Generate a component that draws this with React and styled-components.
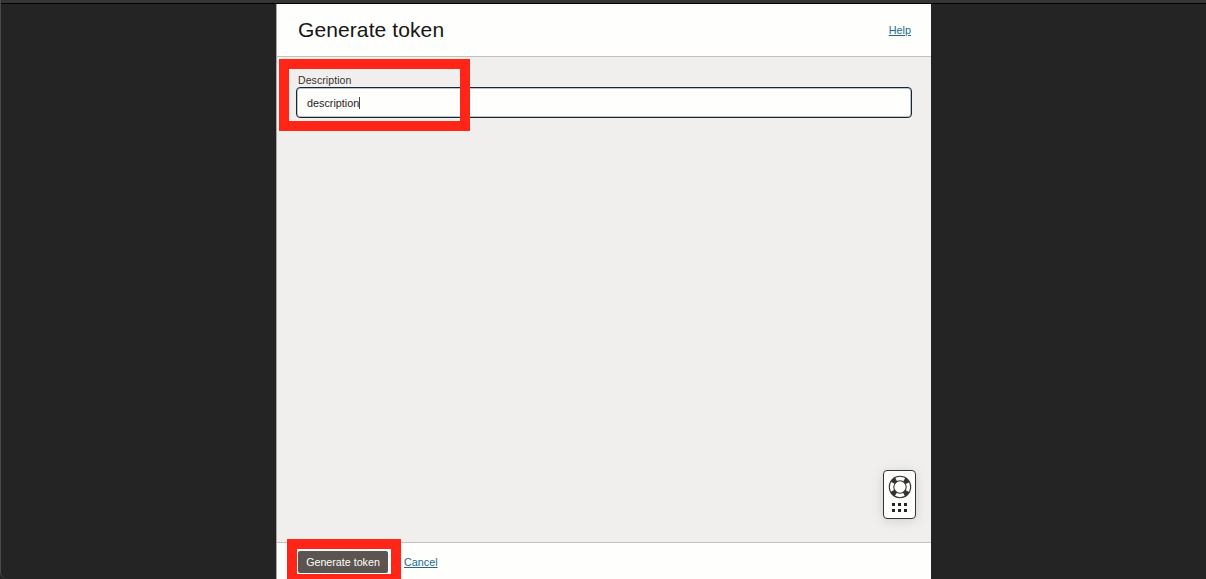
import React from "react";
import styled, { createGlobalStyle } from "styled-components";

const GlobalStyle = createGlobalStyle`
  * { box-sizing: border-box; }
  html, body { margin: 0; background: #242424; }
  body { font-family: "Liberation Sans", Helvetica, Arial, sans-serif; color: #161513; }
`;

const Screen = styled.div`
  position: relative;
  width: 1206px;
  height: 579px;
  overflow: hidden;
  display: flex;
  flex-direction: column;
  background: #242424;
  border-left: 1px solid #4a4a4a;
  border-bottom-left-radius: 7px;
`;

const TopStrip = styled.div`
  flex: none;
  height: 4px;
  background: #353535;
  border-bottom: 1px solid #000;
`;

const Drawer = styled.section`
  flex: 1;
  width: 655px;
  margin-left: 275px;
  display: flex;
  flex-direction: column;
  background: #f1efee;
  border-left: 1px solid #aaa8a6;
`;

const Header = styled.header`
  flex: none;
  height: 53px;
  padding: 0 20px 1px 21px;
  display: flex;
  align-items: center;
  justify-content: space-between;
  background: #fefefd;
  border-bottom: 1px solid #c5c0be;
`;

const Title = styled.h1`
  margin: 0;
  font-size: 21px;
  line-height: 24px;
  font-weight: 400;
  letter-spacing: 0.1px;
`;

const Link = styled.a`
  font-size: 10.8px;
  line-height: 14px;
  color: #22688a;
  text-decoration: underline;
  text-decoration-thickness: 1px;
  text-underline-offset: 1px;
`;

const Body = styled.main`
  flex: 1;
  padding: 16px 19px 0 19px;
`;

const Label = styled.label`
  display: block;
  height: 14px;
  padding-left: 2px;
  font-size: 10.5px;
  line-height: 14px;
  letter-spacing: 0.08px;
  color: #35322f;
`;

const Field = styled.div`
  height: 31px;
  display: flex;
  align-items: center;
  padding-left: 10px;
  font-size: 10.8px;
  color: #252321;
  background: #fefefd;
  border: 1.5px solid #10273c;
  border-radius: 4px;
  box-shadow: inset 0 0 0 1px #c4c2c0;
`;

const Caret = styled.span`
  width: 1px;
  height: 12px;
  background: #444;
`;

const Footer = styled.footer`
  flex: none;
  height: 37px;
  padding: 8px 0 0 21px;
  display: flex;
  gap: 16px;
  background: #fefefd;
  border-top: 1px solid #c5c0be;
`;

const PrimaryButton = styled.button`
  width: 90px;
  height: 22px;
  padding: 0;
  border: 0;
  border-radius: 2px;
  background: #5b5450;
  color: #fff;
  font: 10.7px/22px "Liberation Sans", Helvetica, Arial, sans-serif;
`;

const FooterLink = styled(Link)`
  margin-top: 4px;
`;

const Highlight = styled.div`
  position: absolute;
  left: ${(p) => p.$left}px;
  top: ${(p) => p.$top}px;
  width: ${(p) => p.$width}px;
  height: ${(p) => p.$height}px;
  border: 10px solid #ff2617;
  pointer-events: none;
`;

const HelpWidget = styled.div`
  position: absolute;
  left: 882px;
  top: 470px;
  width: 33px;
  height: 49px;
  display: flex;
  flex-direction: column;
  align-items: center;
  padding-top: 4px;
  gap: 4px;
  background: #fefefd;
  border: 1px solid #343434;
  border-radius: 4px;
  box-shadow: 0 2px 12px rgba(0, 0, 0, 0.13);
`;

const DotGrid = styled.div`
  display: grid;
  grid-template-columns: repeat(3, 3px);
  column-gap: 3px;
  row-gap: 3px;
`;

const Dot = styled.i`
  width: 3px;
  height: 3px;
  background: #262423;
`;

function LifeRing() {
  return (
    <svg width="24" height="24" viewBox="0 0 24 24" fill="none">
      <circle cx="12" cy="12" r="8.5" stroke="#363433" strokeWidth="5" strokeDasharray="4.8 8.552" strokeDashoffset="-4.276" />
      <circle cx="12" cy="12" r="10.7" stroke="#363433" strokeWidth="1.1" />
      <circle cx="12" cy="12" r="6.2" stroke="#363433" strokeWidth="1.1" />
    </svg>
  );
}

export default function App() {
  return (
    <>
      <GlobalStyle />
      <Screen>
        <TopStrip />
        <Drawer>
          <Header>
            <Title>Generate token</Title>
            <Link>Help</Link>
          </Header>
          <Body>
            <Label>Description</Label>
            <Field>
              description
              <Caret />
            </Field>
          </Body>
          <Footer>
            <PrimaryButton>Generate token</PrimaryButton>
            <FooterLink>Cancel</FooterLink>
          </Footer>
        </Drawer>
        <Highlight $left={278} $top={59} $width={191} $height={72} />
        <Highlight $left={286} $top={539} $width={114} $height={45} />
        <HelpWidget>
          <LifeRing />
          <DotGrid>
            {Array.from({ length: 6 }, (_, i) => (
              <Dot key={i} />
            ))}
          </DotGrid>
        </HelpWidget>
      </Screen>
    </>
  );
}
